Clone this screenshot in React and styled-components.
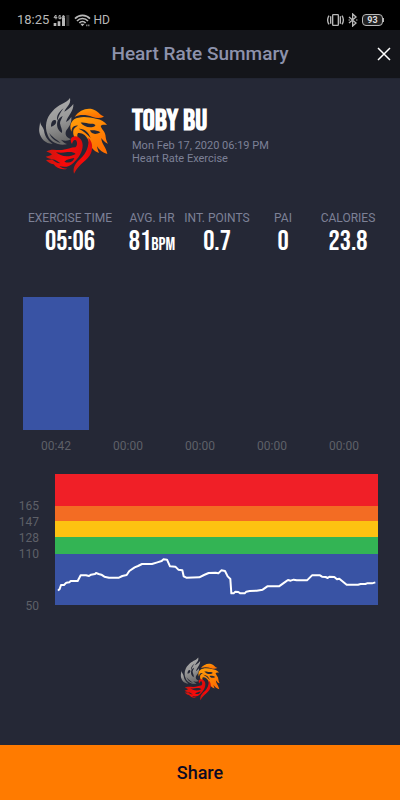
import React, { useId } from "react";
import styled, { createGlobalStyle } from "styled-components";

const GlobalStyle = createGlobalStyle`
  * { box-sizing: border-box; }
  body { margin: 0; background: #252836; font-family: Roboto, sans-serif; }
  h1, h2, p, dl, dd, dt, ul, figure { margin: 0; padding: 0; }
  button { font: inherit; border: 0; cursor: pointer; }
`;

const display = `"Bebas Neue", "Roboto Condensed", "Open Sans Condensed", "Liberation Sans Narrow", sans-serif`;

const Screen = styled.div`
  min-height: 100vh;
  display: flex;
  flex-direction: column;
  background: #252836;
  color: #fff;
`;

const StatusBar = styled.div`
  height: 30px;
  padding: 9px 16px 0 17px;
  display: flex;
  justify-content: space-between;
  background: #000;
  color: #b8b8b8;
`;

const StatusGroup = styled.div`
  height: 22px;
  display: flex;
  align-items: center;
  gap: 4px;
`;

const Clock = styled.span`
  font-size: 13px;
  line-height: 22px;
`;

const Network = styled.span`
  font-size: 12px;
  line-height: 22px;
  margin-left: -2px;
`;

const Header = styled.header`
  height: 49px;
  padding: 0 8px;
  display: grid;
  grid-template-columns: 16px 1fr 16px;
  align-items: center;
  background: #14151a;
  border-bottom: 1px solid #222532;
`;

const Title = styled.h1`
  grid-column: 2;
  text-align: center;
  font-size: 19px;
  line-height: 24px;
  font-weight: 500;
  color: #8d92ac;
`;

const CloseButton = styled.button`
  width: 16px;
  height: 16px;
  padding: 0;
  display: grid;
  place-items: center;
  background: none;
  color: #fff;
`;

const Main = styled.main`
  flex: 1;
  display: flex;
  flex-direction: column;
`;

const Profile = styled.section`
  padding: 18px 24px 0 38px;
  display: flex;
  gap: 22px;
`;

const Identity = styled.div`
  padding-top: 6px;
  color: #7d8196;
  font-size: 11px;
  line-height: 13px;
`;

const Name = styled.h2`
  font-family: ${display};
  font-size: 30px;
  line-height: 36px;
  font-weight: 700;
  color: #fff;
`;

const Stats = styled.dl`
  padding: 35px 24px 0;
  display: grid;
  grid-template-columns: minmax(0, 92fr) minmax(0, 72fr) minmax(0, 58fr) minmax(0, 74fr) minmax(0, 56fr);
  justify-items: center;
`;

const Stat = styled.div`
  white-space: nowrap;
  text-align: center;
`;

const StatLabel = styled.dt`
  font-size: 12px;
  line-height: 16px;
  color: #7d8196;
`;

const StatValue = styled.dd`
  font-family: ${display};
  font-size: 28px;
  line-height: 32px;
  font-weight: 400;
`;

const Unit = styled.span`
  font-size: 18px;
`;

const ZoneChart = styled.ul`
  margin: 36px 20px 0;
  display: grid;
  grid-template-columns: repeat(5, 1fr);
  list-style: none;
`;

const Zone = styled.li`
  padding: 0 3px;
  text-align: center;
  font-size: 12px;
  line-height: 16px;
  color: #5e6068;
`;

const ZoneTrack = styled.div`
  height: 133px;
  margin-bottom: 8px;
  display: flex;
  align-items: flex-end;
`;

const ZoneBar = styled.div`
  width: 100%;
  background: #3953a4;
`;

const RateChart = styled.figure`
  padding: 20px 22px 0 0;
  display: flex;
`;

const Axis = styled.div`
  width: 55px;
  padding: 24px 16px 0 0;
  display: flex;
  flex-direction: column;
  text-align: right;
  font-size: 12px;
  line-height: 16px;
  color: #5e6068;
`;

const Floor = styled.span`
  margin-top: 36px;
`;

const Bands = styled.div`
  flex: 1;
  display: grid;
  grid-template-rows: 32px 15px 16px 17px 51px;
  align-self: flex-start;
`;

const Band = styled.div`
  background: ${(p) => p.$color};
`;

const Trace = styled.svg`
  display: block;
  width: 100%;
  height: 51px;
`;

const Brand = styled.div`
  flex: 1;
  padding: 43px 0 41px;
  display: flex;
  justify-content: center;
  align-items: flex-start;
`;

const ShareButton = styled.button`
  && { font-size: 18px; font-weight: 500; }
  height: 55px;
  width: 100%;
  line-height: 24px;
  background: #ff7b00;
  color: #0b0a24;
`;

function Logo({ width, height }) {
  const id = useId();
  return (
    <svg width={width} height={height} viewBox="24 22 216 234" role="img" aria-label="Phoenix emblem">
      <defs>
        <linearGradient id={`${id}s`} x1="0" y1="0" x2="0.2" y2="1">
          <stop offset="0" stopColor="#b0b0b0" />
          <stop offset="0.55" stopColor="#999" />
          <stop offset="1" stopColor="#6c6c6c" />
        </linearGradient>
        <linearGradient id={`${id}o`} x1="0" y1="0" x2="0.5" y2="1">
          <stop offset="0" stopColor="#ffa00a" />
          <stop offset="1" stopColor="#ff7000" />
        </linearGradient>
        <linearGradient id={`${id}r`} x1="0" y1="0" x2="1" y2="0">
          <stop offset="0" stopColor="#c91810" />
          <stop offset="0.5" stopColor="#fa0909" />
          <stop offset="1" stopColor="#d80c0c" />
        </linearGradient>
      </defs>
      <g fill={`url(#${id}s)`}>
        <path d="M120 25C108 42 86 42 66 66C48 84 44 112 52 133C56 148 68 158 84 163C95 166 106 165 111 163C104 161 99 156 93 150C103 155 116 154 123 148C110 144 104 136 108 124C114 114 126 104 124 82C119 90 113 95 108 97C112 80 132 64 130 43C122 54 112 61 103 66C108 52 124 45 120 25Z" />
        <path d="M30 93C30 106 39 110 42 122C44 138 50 150 68 163C46 162 32 148 28 128C26 113 31 106 30 93Z" />
      </g>
      <g fill={`url(#${id}o)`}>
        <path d="M134 82C148 62 169 54 188 59C203 63 209 76 222 81C211 86 200 86 188 82C168 75 150 74 134 82Z" />
        <path d="M124 126C116 104 126 87 145 84C165 80 180 84 198 87C214 89 224 96 231 106C221 104 215 105 212 109C216 122 227 126 227 142C228 150 230 156 234 162C225 159 219 152 214 145C214 162 228 172 232 193C218 190 207 181 201 170C202 178 205 184 207 190C189 184 180 170 175 152C170 138 157 128 144 130C140 136 142 144 145 151C132 146 128 134 130 122C132 115 139 110 144 108C132 106 125 112 124 126Z" />
      </g>
      <g fill={`url(#${id}r)`}>
        <path d="M49 186C62 176 78 182 96 181C111 180 124 173 136 173C142 170 143 158 138 152C132 148 128 154 126 163C118 151 124 140 136 140C148 141 158 152 158 167C158 187 146 205 130 220C116 234 101 233 88 229C92 234 102 237 112 237C94 242 79 235 71 224C61 223 54 217 48 211C56 211 63 210 70 208C61 208 53 206 47 201C55 200 61 198 66 194C60 189 54 187 49 186Z" />
        <path d="M175 144C188 156 189 175 183 190C175 212 148 220 132 252C127 231 138 219 151 207C169 192 178 169 175 144Z" />
      </g>
      <g fill="#252836">
        <path d="M101 56C84 69 79 80 82 94C85 82 89 71 101 56Z" />
        <path d="M63 111C62 98 69 87 77 92C81 98 76 109 63 111Z" />
        <path d="M82 96C79 112 85 122 96 130C98 121 92 112 90 101C90 94 95 88 98 79C91 83 85 88 82 96Z" />
        <path d="M58 130C62 144 74 154 92 160C80 148 68 145 58 130Z" />
        <path d="M152 99C162 110 176 116 191 111C202 107 193 101 183 102C173 103 164 97 152 99Z" />
        <path d="M180 122C184 135 199 135 211 128C202 122 191 121 180 122Z" />
        <path d="M146 117C164 116 176 128 182 145C171 133 160 123 146 117Z" />
        <path d="M78 188C89 190 99 190 112 187C122 186 132 187 137 193C122 200 107 203 92 196C86 194 82 191 78 188Z" />
        <path d="M103 216C111 208 122 208 133 205C130 216 118 223 103 216Z" />
        <path d="M66 209C73 216 80 221 91 221C82 216 78 210 66 209Z" />
      </g>
    </svg>
  );
}

const SignalIcon = () => (
  <svg width="17" height="13" viewBox="0 0 51 39" fill="currentColor" aria-hidden="true">
    <path d="M2 27h8v9H2zM14 22h8v14h-8zM27 10h9v26h-9z" />
    <path d="M40 3h9v33h-9z" opacity=".25" />
    <path d="M8 3L3 11h10M9 3v13M23 5h-5v9h6v-5h-3M27 7h9M31 3v9" fill="none" stroke="currentColor" strokeWidth="3" />
  </svg>
);

const WifiIcon = () => (
  <svg width="17" height="13" viewBox="0 0 51 39" fill="none" stroke="currentColor" strokeWidth="5" aria-hidden="true">
    <path d="M3 14C15 1 36 1 48 14M9 21C18 11 33 11 42 21M16 27C21 21 30 21 35 27" />
    <path d="M19 29h13l-7 8z" fill="currentColor" stroke="none" />
    <path d="M37 34h3M43 34h3" />
  </svg>
);

const VibrateIcon = () => (
  <svg width="17" height="14" viewBox="0 0 51 42" fill="none" stroke="currentColor" strokeWidth="4" aria-hidden="true">
    <rect x="17" y="5" width="17" height="32" rx="2" />
    <path d="M11 10v22M40 10v22M6 8C1 16 1 26 6 34M45 8C50 16 50 26 45 34" />
  </svg>
);

const BluetoothIcon = () => (
  <svg width="10" height="14" viewBox="0 0 30 42" fill="none" stroke="currentColor" strokeWidth="4" aria-hidden="true">
    <path d="M3 12L24 30L14 39V3L24 12L3 30" />
    <path d="M2 21h3M25 21h3" />
  </svg>
);

const Battery = styled.span`
  width: 21px;
  height: 12px;
  border: 1px solid #b8b8b8;
  border-radius: 4px;
  display: grid;
  place-items: center;
  background: #222;
  color: #ddd;
  font-size: 9px;
  line-height: 10px;
  font-weight: 700;
`;

const BatteryTip = styled.span`
  width: 1px;
  height: 4px;
  margin-left: -4px;
  background: #b8b8b8;
`;

const stats = [
  ["EXERCISE TIME", "05:06"],
  ["AVG. HR", "81", "BPM"],
  ["INT. POINTS", "0.7"],
  ["PAI", "0"],
  ["CALORIES", "23.8"],
];

const zones = [
  { time: "00:42", share: 100 },
  { time: "00:00", share: 0 },
  { time: "00:00", share: 0 },
  { time: "00:00", share: 0 },
  { time: "00:00", share: 0 },
];

const trace =
  "175,511 180,506 184,494 193,494 200,487 209,486 213,482 234,482 243,465 259,465 268,467 274,463 286,461 289,458 297,461 305,463 314,469 328,472 358,472 368,467 381,464 389,452 405,441 415,437 427,431 457,431 473,426 486,422 491,417 502,418 511,438 527,439 536,448 548,450 552,468 560,472 599,471 613,464 627,458 648,457 656,459 665,450 676,452 684,468 692,476 695,519 702,519 707,514 716,515 722,519 735,519 740,514 750,512 771,511 789,508 803,498 838,498 858,484 865,479 873,481 882,478 891,480 922,480 937,465 961,465 967,469 978,470 984,473 989,469 1004,470 1012,477 1019,475 1030,484 1041,493 1075,493 1083,491 1097,491 1102,489 1117,489 1127,486";

export default function App() {
  return (
    <Screen>
      <GlobalStyle />
      <StatusBar>
        <StatusGroup>
          <Clock>18:25</Clock>
          <SignalIcon />
          <WifiIcon />
          <Network>HD</Network>
        </StatusGroup>
        <StatusGroup>
          <VibrateIcon />
          <BluetoothIcon />
          <Battery>93</Battery>
          <BatteryTip />
        </StatusGroup>
      </StatusBar>
      <Header>
        <Title>Heart Rate Summary</Title>
        <CloseButton aria-label="Close">
          <svg width="14" height="14" viewBox="0 0 14 14" stroke="currentColor" strokeWidth="1.5" aria-hidden="true">
            <path d="M1 1L13 13M13 1L1 13" />
          </svg>
        </CloseButton>
      </Header>
      <Main>
        <Profile>
          <Logo width={72} height={78} />
          <Identity>
            <Name>TOBY BU</Name>
            <p>Mon Feb 17, 2020 06:19 PM</p>
            <p>Heart Rate Exercise</p>
          </Identity>
        </Profile>
        <Stats>
          {stats.map(([label, value, unit]) => (
            <Stat key={label}>
              <StatLabel>{label}</StatLabel>
              <StatValue>
                {value}
                {unit && <Unit>{unit}</Unit>}
              </StatValue>
            </Stat>
          ))}
        </Stats>
        <ZoneChart aria-label="Time in each zone">
          {zones.map((zone, i) => (
            <Zone key={i}>
              <ZoneTrack>
                <ZoneBar style={{ height: `${zone.share}%` }} />
              </ZoneTrack>
              {zone.time}
            </Zone>
          ))}
        </ZoneChart>
        <RateChart aria-label="Heart rate over time">
          <Axis>
            <span>165</span>
            <span>147</span>
            <span>128</span>
            <span>110</span>
            <Floor>50</Floor>
          </Axis>
          <Bands>
            <Band $color="#f01f27" />
            <Band $color="#f36c23" />
            <Band $color="#fdc211" />
            <Band $color="#33b454" />
            <Band $color="#3953a4">
              <Trace viewBox="166 401 969 153" preserveAspectRatio="none" aria-hidden="true">
                <polyline
                  points={trace}
                  fill="none"
                  stroke="#fff"
                  strokeWidth="2"
                  strokeLinejoin="round"
                  vectorEffect="non-scaling-stroke"
                />
              </Trace>
            </Band>
          </Bands>
        </RateChart>
        <Brand>
          <Logo width={41} height={44} />
        </Brand>
      </Main>
      <ShareButton>Share</ShareButton>
    </Screen>
  );
}
